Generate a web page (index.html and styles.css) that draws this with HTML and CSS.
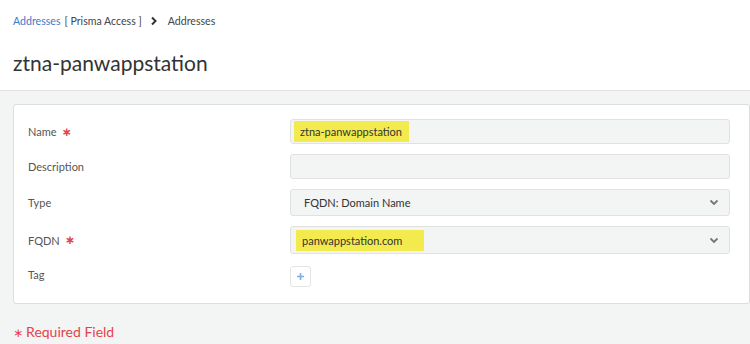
FILE: index.html
```html
<!DOCTYPE html>
<html lang="en">
<head>
  <meta charset="UTF-8" />
  <title>ztna-panwappstation</title>
  <link rel="stylesheet" href="styles.css">
</head>
<body>
  <!-- Page header -->
  <div class="page-header">
    <div class="breadcrumb">
      <a class="crumb-link" href="#">Addresses</a>
      <span class="crumb-scope">[ Prisma Access ]</span>
      <svg class="crumb-sep" width="8" height="10" viewBox="0 0 8 10"><path d="M2 1.5 L5.5 5 L2 8.5" fill="none" stroke="#333" stroke-width="2"/></svg>
      <span class="crumb-current">Addresses</span>
    </div>
    <h1 class="page-title">ztna-panwappstation</h1>
  </div>

  <!-- Form -->
  <div class="page-body">
    <div class="form-card">
      <div class="form-row">
        <label class="form-label">Name <span class="req">∗</span></label>
        <div class="field field-name"><span class="hl">ztna-panwappstation</span></div>
      </div>
      <div class="form-row">
        <label class="form-label">Description</label>
        <div class="field field-desc"></div>
      </div>
      <div class="form-row">
        <label class="form-label">Type</label>
        <div class="field field-select field-type">
          <span class="select-value">FQDN: Domain Name</span>
          <svg class="chevron" width="10" height="7" viewBox="0 0 10 7"><path d="M1.5 1.5 L5 5 L8.5 1.5" fill="none" stroke="#777" stroke-width="1.8"/></svg>
        </div>
      </div>
      <div class="form-row">
        <label class="form-label">FQDN <span class="req">∗</span></label>
        <div class="field field-select field-fqdn">
          <span class="hl">panwappstation.com</span>
          <svg class="chevron" width="10" height="7" viewBox="0 0 10 7"><path d="M1.5 1.5 L5 5 L8.5 1.5" fill="none" stroke="#777" stroke-width="1.8"/></svg>
        </div>
      </div>
      <div class="form-row row-tag">
        <label class="form-label">Tag</label>
        <button class="add-btn">
          <svg width="9" height="9" viewBox="0 0 9 9"><path d="M4.5 1 V8 M1 4.5 H8" stroke="#7aaee6" stroke-width="1.6"/></svg>
        </button>
      </div>
    </div>
    <div class="required-note"><span class="req">∗</span> Required Field</div>
  </div>
</body>
</html>
```

FILE: styles.css
```css
* {
  margin: 0;
  padding: 0;
  box-sizing: border-box;
}
body {
  font-family: 'Lato', 'Liberation Sans', sans-serif;
  background: #f3f4f4;
  color: #333;
  width: 750px;
  height: 344px;
  overflow: hidden;
}
/* Header */
.page-header {
  background: #fff;
  height: 90px;
  padding: 14px 0 0 13px;
}
.breadcrumb {
  display: flex;
  align-items: center;
  font-size: 10.6px;
  height: 14px;
}
.crumb-link {
  color: #3b7ac9;
  text-decoration: none;
}
.crumb-scope {
  color: #444;
  margin-left: 4px;
}
.crumb-sep {
  margin: 0 10px 0 8px;
}
.crumb-current {
  color: #444;
}
.page-title {
  font-size: 21px;
  font-weight: 400;
  color: #333;
  margin-top: 22px;
}
/* Body */
.page-body {
  border-top: 1px solid #e2e3e3;
  padding: 13px 0 0 13px;
}
.form-card {
  background: #fff;
  border: 1px solid #dcdddd;
  border-radius: 3px;
  width: 737px;
  padding: 14px 19px 16px 14px;
  display: flex;
  flex-direction: column;
  gap: 10px;
}
.form-row {
  display: flex;
  align-items: center;
}
.form-label {
  width: 262px;
  flex-shrink: 0;
  font-size: 11px;
  color: #555;
  display: flex;
  align-items: center;
}
.req {
  font-family: 'DejaVu Sans', sans-serif;
  color: #e4434a;
  font-size: 12px;
  font-weight: bold;
  margin-left: 5px;
  line-height: 1;
}
.field {
  flex: 1;
  height: 25px;
  background: #f3f4f4;
  border: 1px solid #e0e1e1;
  border-radius: 3px;
  display: flex;
  align-items: center;
  font-size: 11px;
  color: #333;
}
.field-select {
  height: 27px;
  padding: 0 10px 0 13px;
  justify-content: space-between;
}
.field-fqdn {
  height: 28px;
  padding-left: 5px;
}
.field-name {
  padding-left: 3px;
}
.hl {
  background: #f3ea4e;
  white-space: nowrap;
  line-height: 13px;
}
.field-name .hl {
  padding: 4px 7px 4px 6px;
}
.field-fqdn .hl {
  padding: 4px 22px 4px 6px;
}
.row-tag {
  margin-top: 2px;
  align-items: flex-start;
}
.row-tag .form-label {
  padding-top: 2px;
}
.add-btn {
  width: 21px;
  height: 21px;
  background: #fff;
  border: 1px solid #e3e4e4;
  border-radius: 3px;
  display: flex;
  align-items: center;
  justify-content: center;
}
.required-note {
  margin-top: 19px;
  font-size: 14px;
  color: #e4434a;
  display: flex;
  align-items: center;
}
.required-note .req {
  margin: 3px 3px 0 0;
  font-size: 12px;
  font-weight: normal;
}
```
